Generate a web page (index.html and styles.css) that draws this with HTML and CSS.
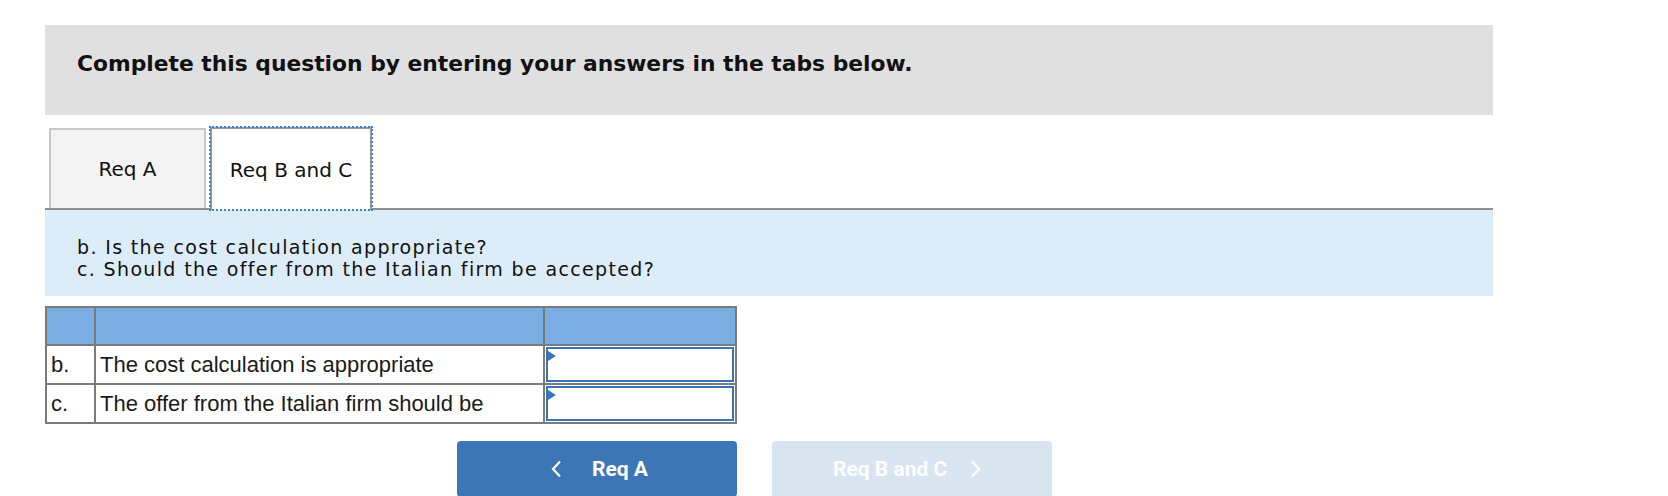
FILE: index.html
```html
<!DOCTYPE html>
<html>
<head>
<meta charset="utf-8">
<link rel="stylesheet" href="styles.css">
</head>
<body>
<div class="page">
  <div class="banner">
    <h1 class="banner-title">Complete this question by entering your answers in the tabs below.</h1>
  </div>
  <div class="tabs">
    <div class="tab tab-inactive">Req A</div>
    <div class="tab tab-active">Req B and C</div>
  </div>
  <div class="prompt">
    <div>b. Is the cost calculation appropriate?</div>
    <div>c. Should the offer from the Italian firm be accepted?</div>
  </div>
  <table class="answers">
    <tr class="head">
      <th class="c1"></th>
      <th class="c2"></th>
      <th class="c3"></th>
    </tr>
    <tr>
      <td class="c1">b.</td>
      <td class="c2">The cost calculation is appropriate</td>
      <td class="c3"><div class="field"><span class="flag"></span></div></td>
    </tr>
    <tr>
      <td class="c1">c.</td>
      <td class="c2">The offer from the Italian firm should be</td>
      <td class="c3"><div class="field"><span class="flag"></span></div></td>
    </tr>
  </table>
  <div class="nav">
    <div class="btn btn-prev">
      <svg class="chev" width="12" height="18" viewBox="0 0 12 18"><polyline points="10,1.5 3,9 10,16.5" fill="none" stroke="#ffffff" stroke-width="2.2"/></svg>
      <span>Req A</span>
    </div>
    <div class="btn btn-next">
      <span>Req B and C</span>
      <svg class="chev" width="12" height="18" viewBox="0 0 12 18"><polyline points="2,1.5 9,9 2,16.5" fill="none" stroke="#ffffff" stroke-width="2.2"/></svg>
    </div>
  </div>
</div>
</body>
</html>
```
FILE: styles.css
```css
html, body {
  margin: 0;
  padding: 0;
  background: #ffffff;
}
.page {
  margin-left: 45px;
  width: 1448px;
  padding-top: 25px;
  font-family: "DejaVu Sans", Verdana, sans-serif;
  color: #111111;
}
.banner {
  background: #e0e0e0;
  height: 90px;
  box-sizing: border-box;
  padding: 26px 0 0 32px;
}
.banner-title {
  margin: 0;
  font-size: 21.8px;
  line-height: 26px;
  font-weight: bold;
  color: #111111;
}
.tabs {
  display: flex;
  align-items: flex-end;
  margin-top: 10px;
  height: 83px;
  border-bottom: 2px solid #909090;
}
.tab {
  box-sizing: border-box;
  display: flex;
  align-items: center;
  justify-content: center;
  font-size: 20px;
  color: #111111;
}
.tab-inactive {
  margin-left: 4px;
  width: 157px;
  height: 80px;
  background: #f3f3f3;
  border: 2px solid #c8c8c8;
  border-bottom: none;
}
.tab-active {
  margin-left: 4px;
  width: 162px;
  height: 83px;
  margin-bottom: -2px;
  background: #ffffff;
  border: 2px solid #999999;
  border-bottom: none;
  outline: 2px dotted #3f7fcf;
  outline-offset: -1px;
}
.prompt {
  background: #dcecf8;
  height: 86px;
  box-sizing: border-box;
  padding: 26px 0 0 32px;
  font-size: 19px;
  letter-spacing: 1.35px;
  line-height: 22px;
  color: #111111;
}
.answers {
  margin-top: 10px;
  border-collapse: collapse;
  font-family: "Liberation Sans", Arial, sans-serif;
  font-size: 22px;
  color: #1a1a1a;
}
.answers th, .answers td {
  border: 2px solid #7a7a7a;
  height: 38px;
  padding: 0 0 0 4px;
  text-align: left;
  box-sizing: border-box;
}
.answers .head th {
  background: #7aaee3;
}
.c1 { width: 49px; }
.c2 { width: 449px; }
.answers .c3 { width: 192px; padding: 1px; }
.field {
  position: relative;
  height: 35px;
  box-sizing: border-box;
  border: 2px solid #3a73b8;
  background: #ffffff;
}
.flag {
  position: absolute;
  left: 0;
  top: 2px;
  width: 0;
  height: 0;
  border-top: 5px solid transparent;
  border-bottom: 5px solid transparent;
  border-left: 8px solid #3a73b8;
}
.nav {
  display: flex;
  margin-top: 17px;
  padding-left: 412px;
  gap: 35px;
}
.btn {
  width: 280px;
  height: 56px;
  box-sizing: border-box;
  border-radius: 4px;
  display: flex;
  align-items: center;
  font-family: Roboto, "Liberation Sans", sans-serif;
  font-weight: 700;
  font-size: 21px;
  color: #ffffff;
}
.btn-prev {
  background: #3c76b7;
  padding-left: 93px;
  gap: 30px;
}
.btn-next {
  background: #d9e4f1;
  padding-left: 61px;
  gap: 23px;
}
.chev {
  display: block;
}
```
